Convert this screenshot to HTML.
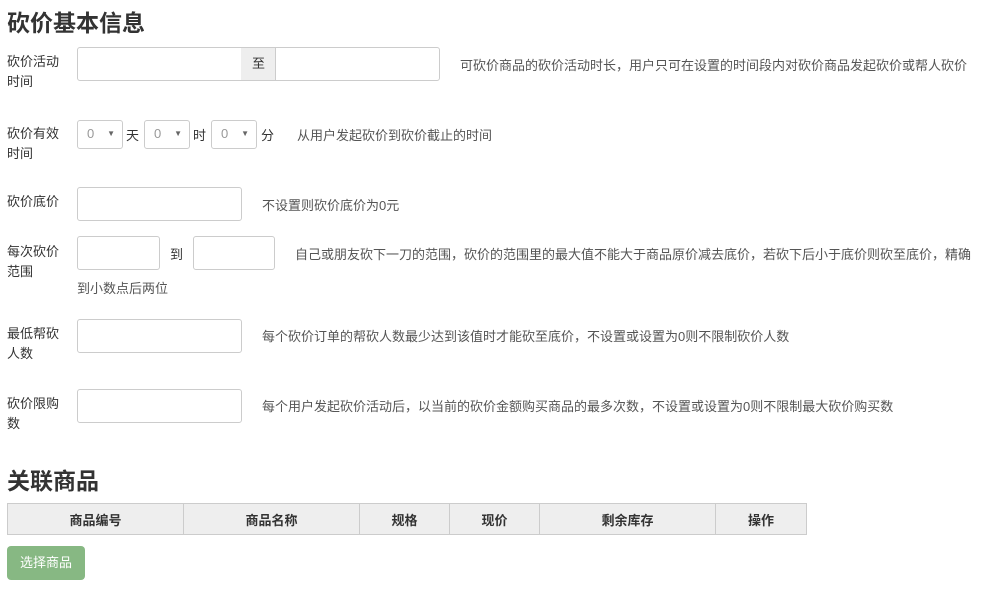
<!DOCTYPE html><html><head><meta charset="utf-8"><style>
body{margin:0;width:983px;height:591px;background:#fff;font-family:"Liberation Sans","Noto Sans CJK SC",sans-serif;color:#333;font-size:13px;position:relative;overflow:hidden}
.a{position:absolute;white-space:nowrap}
.h{font-size:23px;font-weight:bold;color:#333}
.l{line-height:20px;color:#333}
.i{position:absolute;border:1px solid #ccc;border-radius:3px;background:#fff;box-sizing:border-box}
.s{position:absolute;border:1px solid #ccc;border-radius:3px;box-sizing:border-box;color:#999;font-size:13px;line-height:26px;padding-left:9px}
.s:after{content:"▼";position:absolute;right:7px;top:0;font-size:8px;color:#666}
.t{color:#555}
table{position:absolute;left:7px;top:503px;border-collapse:collapse}
td{border:1px solid #ccc;background:#eee;height:31px;padding:0;text-align:center;font-weight:bold;font-size:13px;box-sizing:border-box}
</style></head><body>
<div class="a h" style="left:7px;top:4px">砍价基本信息</div>

<div class="a l" style="left:7px;top:52px">砍价活动<br>时间</div>
<div class="i" style="left:77px;top:47px;width:165px;height:34px;border-radius:3px 0 0 3px"></div>
<div class="a" style="left:241px;top:47px;width:35px;height:34px;background:#eee;border-top:1px solid #ccc;border-bottom:1px solid #ccc;box-sizing:border-box;text-align:center;line-height:32px">至</div>
<div class="i" style="left:275px;top:47px;width:165px;height:34px;border-radius:0 3px 3px 0"></div>
<div class="a t" style="left:460px;top:55px">可砍价商品的砍价活动时长，用户只可在设置的时间段内对砍价商品发起砍价或帮人砍价</div>

<div class="a l" style="left:7px;top:124px">砍价有效<br>时间</div>
<div class="s" style="left:77px;top:120px;width:46px;height:29px">0</div>
<div class="a" style="left:126px;top:125px">天</div>
<div class="s" style="left:144px;top:120px;width:46px;height:29px">0</div>
<div class="a" style="left:193px;top:125px">时</div>
<div class="s" style="left:211px;top:120px;width:46px;height:29px">0</div>
<div class="a" style="left:261px;top:125px">分</div>
<div class="a t" style="left:297px;top:125px">从用户发起砍价到砍价截止的时间</div>

<div class="a l" style="left:7px;top:192px">砍价底价</div>
<div class="i" style="left:77px;top:187px;width:165px;height:34px"></div>
<div class="a t" style="left:262px;top:195px">不设置则砍价底价为0元</div>

<div class="a l" style="left:7px;top:242px">每次砍价<br>范围</div>
<div class="i" style="left:77px;top:236px;width:83px;height:34px"></div>
<div class="a" style="left:170px;top:244px">到</div>
<div class="i" style="left:193px;top:236px;width:82px;height:34px"></div>
<div class="a t" style="left:295px;top:244px">自己或朋友砍下一刀的范围，砍价的范围里的最大值不能大于商品原价减去底价，若砍下后小于底价则砍至底价，精确</div>
<div class="a t" style="left:77px;top:278px">到小数点后两位</div>

<div class="a l" style="left:7px;top:324px">最低帮砍<br>人数</div>
<div class="i" style="left:77px;top:319px;width:165px;height:34px"></div>
<div class="a t" style="left:262px;top:326px">每个砍价订单的帮砍人数最少达到该值时才能砍至底价，不设置或设置为0则不限制砍价人数</div>

<div class="a l" style="left:7px;top:394px">砍价限购<br>数</div>
<div class="i" style="left:77px;top:389px;width:165px;height:34px"></div>
<div class="a t" style="left:262px;top:396px">每个用户发起砍价活动后，以当前的砍价金额购买商品的最多次数，不设置或设置为0则不限制最大砍价购买数</div>

<div class="a h" style="left:7px;top:462px">关联商品</div>
<table><tr><td style="width:176px">商品编号</td><td style="width:176px">商品名称</td><td style="width:90px">规格</td><td style="width:90px">现价</td><td style="width:176px">剩余库存</td><td style="width:91px">操作</td></tr></table>
<div class="a" style="left:7px;top:546px;width:78px;height:34px;background:#87b883;border-radius:4px;color:#fff;text-align:center;line-height:34px">选择商品</div>
</body></html>
